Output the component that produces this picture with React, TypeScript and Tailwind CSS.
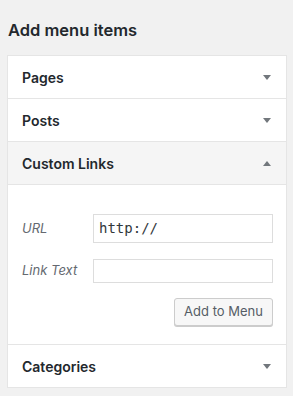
import React from 'react';

function Arrow({ up = false }: { up?: boolean }) {
  return (
    <svg width="8" height="5" viewBox="0 0 8 5" className="shrink-0">
      {up ? <polygon points="0,5 8,5 4,0" fill="#72777c" /> : <polygon points="0,0 8,0 4,5" fill="#72777c" />}
    </svg>
  );
}

function SectionHeader({ title, open = false }: { title: string; open?: boolean }) {
  return (
    <div
      className={`flex h-[43px] items-center justify-between border-b border-[#e5e5e5] pl-[14px] pr-[15px] ${
        open ? 'bg-[#f5f5f5]' : 'bg-white'
      }`}
    >
      <span className="text-[14px] font-semibold text-[#23282d]">{title}</span>
      <Arrow up={open} />
    </div>
  );
}

export default function App() {
  return (
    <div className="h-[396px] w-[293px] bg-[#f1f1f1] font-['Inter',sans-serif]">
      <h2 className="px-[8px] pt-[20px] text-[16.5px] font-semibold leading-[20px] text-[#23282d]">Add menu items</h2>

      <div className="ml-[7px] mt-[15px] w-[280px] border border-b-0 border-[#e5e5e5] bg-white">
        <SectionHeader title="Pages" />
        <SectionHeader title="Posts" />
        <SectionHeader title="Custom Links" open />

        <div className="flex h-[160px] flex-col border-b border-[#e5e5e5] pl-[14px] pr-[13px] pt-[29px]">
          <div className="flex items-center justify-between">
            <label className="text-[13px] italic text-[#646970]">URL</label>
            <div className="flex h-[29px] w-[180px] items-center border border-[#ddd] px-[5px] font-['DejaVu_Sans_Mono',monospace] text-[14px] text-[#32373c]">
              http://
            </div>
          </div>
          <div className="mt-[16px] flex items-center justify-between">
            <label className="text-[13px] italic text-[#646970]">Link Text</label>
            <div className="h-[24px] w-[180px] border border-[#ddd]" />
          </div>
          <div className="mt-[15px] flex justify-end">
            <button className="flex h-[28px] w-[99px] items-center justify-center rounded-[3px] border border-[#ccc] bg-[#f7f7f7] text-[13px] text-[#555d66] shadow-[0_1px_0_#ccc]">
              Add to Menu
            </button>
          </div>
        </div>

        <SectionHeader title="Categories" />
      </div>
    </div>
  );
}
